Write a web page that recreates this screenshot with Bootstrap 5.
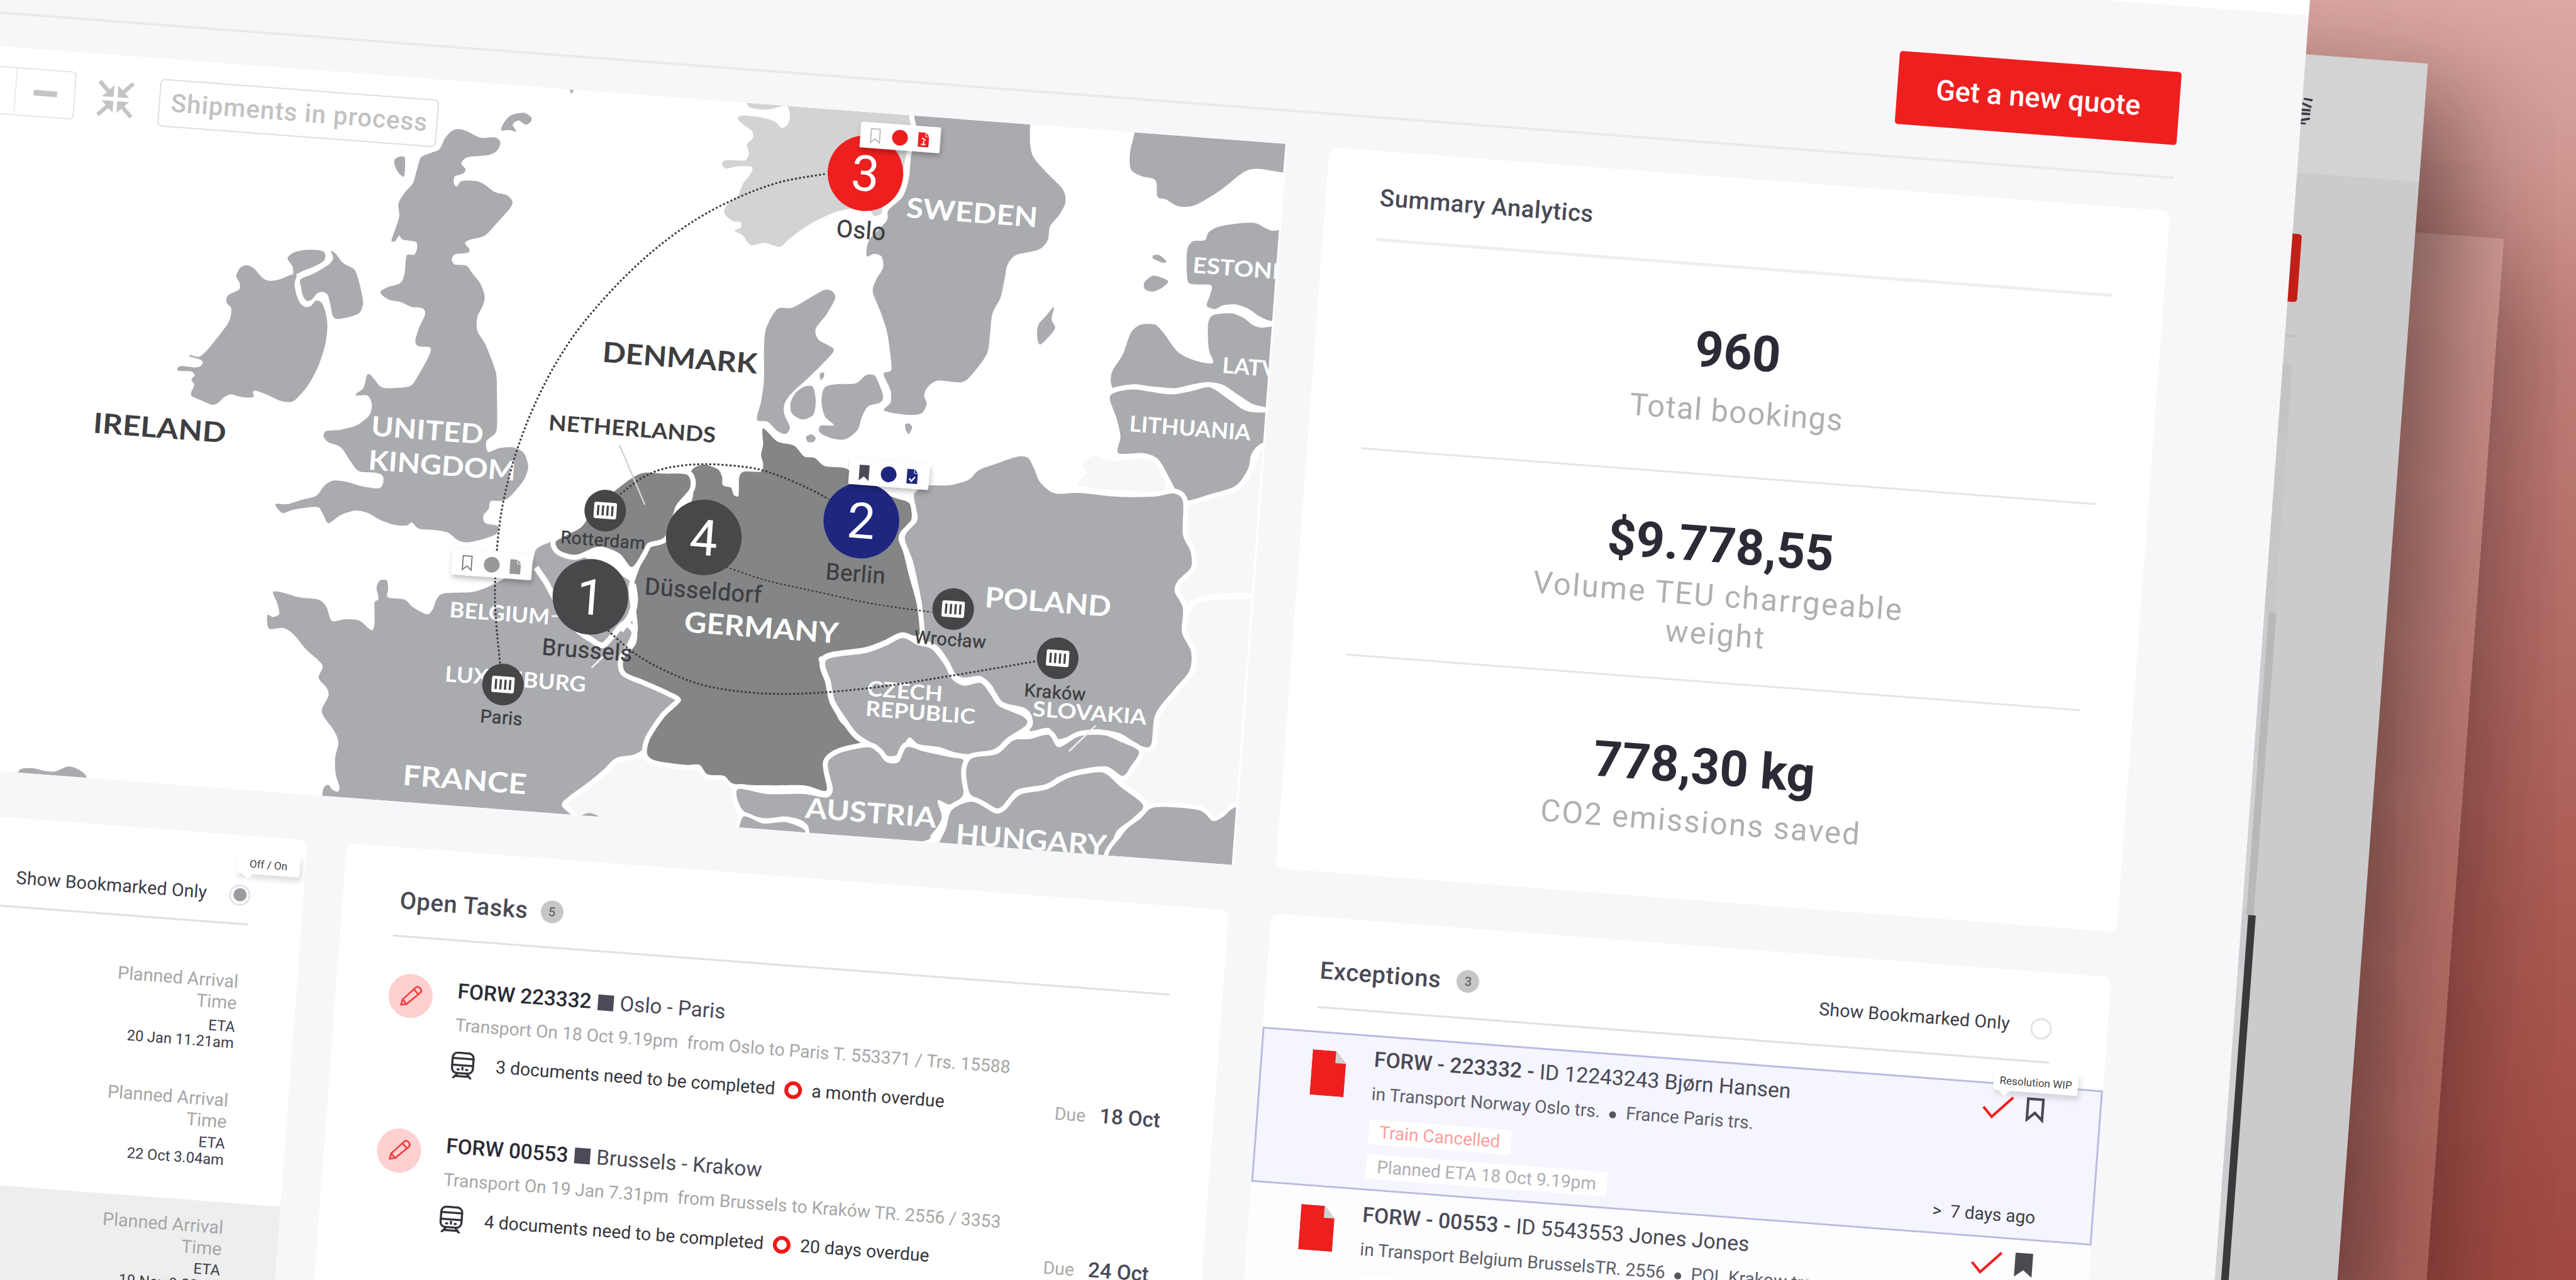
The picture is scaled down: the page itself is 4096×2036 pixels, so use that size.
<!DOCTYPE html>
<html lang="en">
<head>
<meta charset="utf-8">
<title>Shipment dashboard</title>
<meta name="viewport" content="width=device-width, initial-scale=1">
<link href="https://cdn.jsdelivr.net/npm/bootstrap@5.3.0/dist/css/bootstrap.min.css" rel="stylesheet">
<style>
  html, body { height: 100%; margin: 0; overflow: hidden; }
  body { font-family: Roboto, "Liberation Sans", sans-serif; color: #4a4a56; font-size: 28px; line-height: 40px;
    background: linear-gradient(183deg, #dca8a3 0%, #cf9690 12%, #c4827b 24%, #b8706a 42%, #aa5a52 65%, #a04a43 88%, #9e4841 100%); }
  .stage { position: relative; width: 4096px; height: 2036px; overflow: hidden; }
  .tilt { position: absolute; left: 0; top: 0; width: 4096px; height: 2036px; transform-origin: 0 0; transform: matrix(1, .0760, -.0743, 1, 0, 3); }
  .win { position: absolute; }
  .win-glass { left: 2600px; top: 74px; width: 1387px; height: 2400px; background: rgba(255,235,232,.16); box-shadow: 30px 50px 170px rgba(40,20,20,.38); }
  .win-back { left: 2400px; top: -194px; width: 1446px; height: 2600px; background: #cbcbcd; box-shadow: 40px 55px 170px rgba(40,24,22,.62); }
  .win-back .bar-top { height: 188px; background: #d3d3d3; }
  .win-main { left: -40px; top: -420px; width: 3692px; height: 2700px; background: #f7f7f9; }
  .bar-white { height: 164px; background: #fff; }
  .page-head { height: 275px; margin-right: 194px; padding-top: 105px; border-bottom: 4px solid #eaeaeb; }
  .btn-quote { width: 448px; height: 116px; border-radius: 5px; background: #ee1f1f; color: #fff; font-size: 45px; font-weight: 500; line-height: 116px; padding: 0; border: 0; }
  .row-one { margin-top: 51px; gap: 67px; height: 1147px; }
  .row-two { margin-top: 72px; height: 1100px; }
  .panel { background: #fff; border-radius: 12px; position: relative; }
  .map-panel { width: 2092px; border-radius: 0; overflow: hidden; }
  .sum-panel { width: 1337px; padding: 0 83px 0 86px; }
  .p-title { font-size: 38px; font-weight: 500; color: #4a4a56; letter-spacing: .6px; }
  .sum-head { height: 143px; padding-top: 10px; border-bottom: 5px solid #efefef; }
  .stat { height: 331px; border-bottom: 3px solid #e5e5e5; padding-top: 87px; }
  .stat-two { height: 328px; padding-top: 64px; padding-right: 9px; }
  .stat-three { border-bottom: 0; padding-top: 88px; padding-right: 9px; }
  .num { font-size: 79px; line-height: 90px; font-weight: 700; color: #2b2b36; }
  .cap { font-size: 49px; line-height: 61px; letter-spacing: 1.3px; color: #b0b0b3; max-width: 660px; margin: 20px auto 0; padding-left: 10px; }
  .stat-two .cap { margin-top: 5px; letter-spacing: 2.4px; padding-left: 4px; } .stat-three .cap { margin-top: 13px; letter-spacing: 2.1px; padding-left: 2px; }

  .map-tools { position: absolute; left: 0; top: 31px; }
  .zoom-box { width: 170px; height: 77px; border: 2px solid #e3e3e3; border-left: 0; border-radius: 0 7px 7px 0; background: #fff; }
  .zoom-box .cell { width: 94px; border-left: 2px solid #ebebeb; }
  .minus-sign { width: 37px; height: 9px; background: #c4c4c4; }
  .ship-filter { width: 443px; height: 76px; border: 2px solid #dfdfdf; border-radius: 7px; color: #c2c2c2; font-size: 40px; letter-spacing: 1.1px; background: #fff; font-weight: 500; margin-left: 40px; padding-left: 4px; }

  .card-a { width: 625px; } .card-b { width: 1403px; margin-left: 62px; padding: 0 84px 0 84px; } .card-c { width: 1336px; margin-left: 67px; }
  .head-line { height: 142px; padding-top: 28px; border-bottom: 3px solid #e0e0e0; }
  .cnt { width: 36px; height: 36px; border-radius: 50%; background: #c6c6c6; font-size: 20px; font-weight: 500; color: #666; margin-left: 20px; }
  .show-only { font-size: 28.5px; color: #3c3c47; letter-spacing: .15px; }
  .radio-dot { width: 34px; height: 34px; border-radius: 50%; border: 3px solid #e4e4e4; background: #fff; }
  .radio-dot i { width: 21px; height: 21px; border-radius: 50%; background: #9c9ca0; }
  .tip { position: absolute; background: #fff; color: #444; font-size: 17px; box-shadow: 3px 7px 9px rgba(0,0,0,.13); border-radius: 4px; white-space: nowrap; }
  .tip::after { content: ""; position: absolute; left: 9px; bottom: -9px; border: 9px solid transparent; border-top-color: #fff; border-bottom: 0; }

  .arr { text-align: right; height: 189px; }
  .arr .gr { color: #a6a6a6; line-height: 34px; font-size: 28.6px; padding-left: 200px; }
  .arr .eta { font-size: 23.6px; line-height: 26px; color: #3c3c47; margin-top: 8px; }

  .task { height: 245.5px; gap: 39px; }
  .pen { width: 70px; height: 70px; border-radius: 50%; background: #ffd0d0; }
  .t-title { font-size: 33.2px; line-height: 44px; white-space: nowrap; }
  .t-title b { font-weight: 500; color: #2c2c36; }
  .sq { width: 25px; height: 25px; background: #4a4a58; margin: 0 10px; }
  .t-sub { color: #a6a6a6; font-size: 28.15px; line-height: 40px; margin-top: 12px; white-space: pre; }
  .t-docs { height: 44px; margin-top: 20px; color: #36363c; white-space: nowrap; font-size: 28.3px; }
  .ring { width: 28px; height: 28px; border-radius: 50%; border: 6px solid #f01818; }

  .exc { height: 247px; border: 3px solid transparent; padding: 14px 0 0 79px; position: relative; background: #fdfdff; }
  .exc-on { border-color: #b9bbe0; background: #f5f5fe; }
  .exc-main { margin-left: 44px; }
  .e-title { font-size: 33.6px; line-height: 44px; white-space: nowrap; }
  .e-title b { font-weight: 500; }
  .e-sub { margin-top: 13px; line-height: 40px; font-size: 28.1px; color: #5e5e69; white-space: nowrap; }
  .e-sub i { width: 11px; height: 11px; border-radius: 50%; background: #55555f; margin: 6px 15px 0 15px; }
  .tagx { display: table; background: #fff; line-height: 39px; padding: 0 17px; color: #aeaeb3; border-radius: 3px; margin-bottom: 16px; }
  .tagx.red { color: #ff9d9d; margin-top: 20px; }
  .e-icons { position: absolute; right: 87px; top: 16px; }
  .e-age { position: absolute; right: 89px; bottom: 14px; color: #3c3c47; }

  .strip { position: absolute; }
  text { font-family: Roboto, "Liberation Sans", sans-serif; }
  text.ctry { font-family: Lato, "Liberation Sans", sans-serif; font-weight: 700; }
</style>
<script src="https://cdn.jsdelivr.net/npm/bootstrap@5.3.0/dist/js/bootstrap.bundle.min.js"></script>
</head>
<body>
<svg width="0" height="0" class="position-absolute">
  <defs>
    <symbol id="i-pen" viewBox="0 0 40 40"><g fill="none" stroke="#f2383c" stroke-width="2.600" stroke-linejoin="round" stroke-linecap="round"><path d="M5 35 L7 26 L27 5 Q30 2.500 33 5 L35 7 Q37.500 10 35 13 L14 33 Z"/><path d="M24 8 L32 16 M7 26 L14 33"/></g></symbol>
    <symbol id="i-train" viewBox="0 0 40 44"><g fill="none" stroke="#33333a" stroke-width="3.400" stroke-linejoin="round" stroke-linecap="round"><rect x="3" y="2" width="34" height="33" rx="8"/><path d="M3 11 H37 M3 22 H37 M20 22 V29 M12 29 H14 M26 29 H28 M12 36 L6 43 M28 36 L34 43 M10 40 H30"/></g></symbol>
    <symbol id="i-file" viewBox="0 0 54 72"><path d="M0 0 H37 L54 19 V72 H0 Z" fill="#ee1f1f"/><path d="M37 0 L54 19 H37 Z" fill="#d0d0d2"/></symbol>
    <symbol id="i-check" viewBox="0 0 50 40"><path d="M2 21 L16 36 L48 3" fill="none" stroke="#f02020" stroke-width="4.200"/></symbol>
    <symbol id="i-mark" viewBox="0 0 30 40"><path d="M3 3 H27 V36 L15 25 L3 36 Z" fill="none" stroke="#4a4a56" stroke-width="4.200"/></symbol>
    <symbol id="i-mark-on" viewBox="0 0 30 40"><path d="M1 1 H29 V39 L15 28 L1 39 Z" fill="#4a4a50"/></symbol>
  </defs>
</svg>

<div class="stage">
 <div class="tilt">
  <div class="win win-glass"></div>

  <div class="win win-back">
    <div class="bar-top"></div>
    <div class="strip" style="left:1200px;top:285px;width:67px;height:108px;background:#c02018;border-radius:5px"></div>
    <div class="strip" style="left:1200px;top:446px;width:67px;height:3px;background:#bdbdbf"></div>
    <div class="strip" style="left:1200px;top:492px;width:67px;height:110px;background:#c3c3c3;border-radius:0 8px 0 0"></div>
    <div class="strip" style="left:1200px;top:602px;width:68px;height:285px;background:#c7c7c7"></div>
    <div class="strip" style="left:1200px;top:887px;width:72px;height:1500px;background:linear-gradient(#cbcbd0 0 226px,#d1d1d1 226px 471px,#cbcbd0 471px 569px,#d1d1d1 569px 811px,#cbcbd0 811px 919px,#d1d1d1 919px)"></div>
    <div class="strip" style="left:1259px;top:887px;width:12px;height:481px;background:#b8b8b8"></div>
    <div class="strip" style="left:1262px;top:1368px;width:12px;height:1100px;background:#3a3a3c"></div>
    <svg class="strip" style="left:1246px;top:69px" width="24" height="42" viewBox="0 0 24 42"><path d="M4 8 L21 14 M8 1 L22 3 M0 19 H20 M0 25 H20 M4 36 L20 32 M2 40 L14 41" stroke="#3c3c46" stroke-width="3.600" fill="none"/></svg>
  </div>

  <div class="win win-main d-flex flex-column">
    <div class="bar-white flex-shrink-0"></div>
    <header class="page-head d-flex justify-content-end flex-shrink-0">
      <button class="btn btn-quote">Get a new quote</button>
    </header>

    <div class="row-one d-flex flex-shrink-0">
      <section class="panel map-panel">
        <svg id="map" class="d-block" width="2089" height="1147" viewBox="-40 74 2089 1147"></svg>
        <div class="map-tools d-flex align-items-center">
          <div class="zoom-box d-flex justify-content-end align-items-stretch">
            <div class="cell d-flex align-items-center justify-content-center"><div class="minus-sign"></div></div>
          </div>
          <svg width="58" height="58" viewBox="0 0 24 24" style="margin-left:35px"><g fill="#c4c4c4" stroke="#c4c4c4" stroke-width="2.600"><path d="M1 1 L8 8 M23 1 L16 8 M1 23 L8 16 M23 23 L16 16"/><path stroke="none" d="M10.700 3 V10.700 H3 Z M13.300 3 V10.700 H21 Z M10.700 21 V13.300 H3 Z M13.300 21 V13.300 H21 Z"/></g></svg>
          <div class="ship-filter d-flex align-items-center justify-content-center">Shipments in process</div>
        </div>
      </section>

      <section class="panel sum-panel">
        <div class="sum-head d-flex align-items-center"><span class="p-title">Summary Analytics</span></div>
        <div class="stat text-center"><div class="num">960</div><div class="cap">Total bookings</div></div>
        <div class="stat stat-two text-center"><div class="num">$9.778,55</div><div class="cap">Volume TEU charrgeable weight</div></div>
        <div class="stat stat-three text-center"><div class="num">778,30 kg</div><div class="cap">CO2 emissions saved</div></div>
      </section>
    </div>

    <div class="row-two d-flex flex-shrink-0">
      <section class="panel card-a">
        <div class="head-line d-flex align-items-center justify-content-end" style="margin-right:85px;padding-top:50px">
          <span class="show-only">Show Bookmarked Only</span>
          <span class="radio-dot d-flex align-items-center justify-content-center" style="margin:0 -1px 0 35px"><i></i></span>
        </div>
        <div class="tip" style="left:516px;top:26px;width:100px;height:34px;line-height:36px;text-align:center">Off / On</div>
        <div class="arr" style="padding:73px 93px 0 0;height:252px">
          <div class="gr">Planned Arrival<br>Time</div>
          <div class="eta">ETA<br>20 Jan 11.21am</div>
        </div>
        <div class="arr" style="padding:10px 95px 0 0">
          <div class="gr">Planned Arrival<br>Time</div>
          <div class="eta" style="margin-top:5px">ETA<br>22 Oct 3.04am</div>
        </div>
        <div class="arr" style="background:#eee;padding:23px 88px 0 0;height:400px">
          <div class="gr">Planned Arrival<br>Time</div>
          <div class="eta" style="margin-top:4px">ETA<br>19 Nov 9.22am</div>
        </div>
      </section>

      <section class="panel card-b">
        <div class="head-line d-flex align-items-center"><span class="p-title" style="padding-left:7px">Open Tasks</span><span class="cnt d-flex align-items-center justify-content-center">5</span></div>
        <div style="height:57px"></div>
        <div class="task d-flex">
          <div class="pen flex-shrink-0 d-flex align-items-center justify-content-center"><svg width="39" height="39"><use href="#i-pen"/></svg></div>
          <div class="flex-grow-1">
            <div class="t-title d-flex align-items-center"><b>FORW 223332</b><span class="sq"></span>Oslo - Paris</div>
            <div class="t-sub">Transport On 18 Oct 9.19pm  from Oslo to Paris T. 553371 / Trs. 15588</div>
            <div class="t-docs d-flex align-items-center">
              <svg width="39" height="43" style="margin:0 33px 0 -3px"><use href="#i-train"/></svg>3 documents need to be completed
              <span class="ring" style="margin:0 15px"></span>a month overdue
              <span class="ms-auto d-flex align-items-baseline" style="padding-top:9px"><span style="color:#aaa;margin-right:22px">Due</span><span style="font-size:33px;font-weight:500;color:#4a4a58">18 Oct</span></span>
            </div>
          </div>
        </div>
        <div class="task d-flex">
          <div class="pen flex-shrink-0 d-flex align-items-center justify-content-center"><svg width="39" height="39"><use href="#i-pen"/></svg></div>
          <div class="flex-grow-1">
            <div class="t-title d-flex align-items-center"><b>FORW 00553</b><span class="sq"></span>Brussels - Krakow</div>
            <div class="t-sub">Transport On 19 Jan 7.31pm  from Brussels to Kraków TR. 2556 / 3353</div>
            <div class="t-docs d-flex align-items-center">
              <svg width="39" height="43" style="margin:0 33px 0 -3px"><use href="#i-train"/></svg>4 documents need to be completed
              <span class="ring" style="margin:0 15px"></span>20 days overdue
              <span class="ms-auto d-flex align-items-baseline" style="padding-top:9px"><span style="color:#aaa;margin-right:22px">Due</span><span style="font-size:33px;font-weight:500;color:#4a4a58">24 Oct</span></span>
            </div>
          </div>
        </div>
      </section>

      <section class="panel card-c">
        <div class="head-line d-flex align-items-center" style="margin:0 88px 0 84px;height:144px;padding-top:26px">
          <span class="p-title">Exceptions</span><span class="cnt d-flex align-items-center justify-content-center" style="margin-left:25px">3</span>
          <span class="show-only ms-auto" style="padding-top:4px">Show Bookmarked Only</span><span class="radio-dot" style="margin:12px 0 0 33px"></span>
        </div>
        <div class="exc exc-on d-flex align-items-start" style="margin-top:36px">
          <svg class="flex-shrink-0" width="54" height="72" style="margin-top:13px"><use href="#i-file"/></svg>
          <div class="exc-main">
            <div class="e-title"><b>FORW - 223332 -</b> ID 12243243 Bjørn Hansen</div>
            <div class="e-sub d-flex align-items-center">in Transport Norway Oslo trs.<i></i>France Paris trs.</div>
            <div class="tagx red">Train Cancelled</div>
            <div class="tagx">Planned ETA 18 Oct 9.19pm</div>
          </div>
          <div class="tip" style="right:37px;top:-27px;width:134px;height:36px;line-height:40px;text-align:center">Resolution WIP</div>
          <div class="e-icons d-flex align-items-start"><svg width="50" height="40"><use href="#i-check"/></svg><svg width="30" height="40" style="margin-left:19px"><use href="#i-mark"/></svg></div>
          <div class="e-age">&gt;&nbsp; 7 days ago</div>
        </div>
        <div class="exc d-flex align-items-start">
          <svg class="flex-shrink-0" width="54" height="72" style="margin-top:12px"><use href="#i-file"/></svg>
          <div class="exc-main">
            <div class="e-title"><b>FORW - 00553 -</b> ID 5543553 Jones Jones</div>
            <div class="e-sub d-flex align-items-center">in Transport Belgium BrusselsTR. 2556<i></i>POL Krakow trs.</div>
            <div class="tagx red">Train Cancelled</div>
          </div>
          <div class="e-icons d-flex align-items-start"><svg width="50" height="40"><use href="#i-check"/></svg><svg width="30" height="40" style="margin-left:19px"><use href="#i-mark-on"/></svg></div>
        </div>
      </section>
    </div>
  </div>
 </div>
</div>

<script>
// Survey sheets: each outline is traced on one of four sheets, [x offset, y offset].
const SHEET = { a: [0, 0], b: [1568, 288], c: [0, 1438], d: [1568, 1726] };
const K = 2.5978;
const geo = (X, Y) => [(X + .0740 * Y) * K, (Y - .0757 * X) * K + 1.5];
const pt = (s, x, y) => geo((x + SHEET[s][0]) * .25, (y + SHEET[s][1]) * .16614);
const parse = str => str.trim().split(/\s+/).map(p => p.split(',').map(Number));
function smooth(p, closed, t = 7) {
  const n = p.length, at = i => closed ? p[(i + n) % n] : p[Math.max(0, Math.min(n - 1, i))];
  const f = v => v.toFixed(1);
  let d = `M${f(p[0][0])} ${f(p[0][1])}`;
  for (let i = 0; i < (closed ? n : n - 1); i++) {
    const a = at(i - 1), b = at(i), c = at(i + 1), e = at(i + 2);
    d += `C${f(b[0] + (c[0] - a[0]) / t)} ${f(b[1] + (c[1] - a[1]) / t)} ${f(c[0] - (e[0] - b[0]) / t)} ${f(c[1] - (e[1] - b[1]) / t)} ${f(c[0])} ${f(c[1])}`;
  }
  return d + (closed ? 'Z' : '');
}
const G = '#a9abaf', D = '#848587', N = '#d2d3d5', L = '#f7f7f8';
const lands = [
 ['d', L, 0, '1310,110 1460,50 1515,-100 1620,-120 1620,1250 1440,1240 1385,1290 1350,1245 1220,1230 1140,1125 1200,1010 1230,880'],
 ['d', L, 0, '-210,1290 -190,1200 -110,1110 -60,1062 0,1055 240,1150 250,1400 -210,1400'],
 ['b', L, 0, '1095,1380 1140,1400 1210,1390 1250,1410 1270,1480 1265,1510 1200,1510 1060,1490 1080,1440 1065,1415'],
 ['a', G, 0, '575,1010 585,980 600,970 618,982 640,1018 658,1028 685,1020 716,1002 722,1010 717,1040 722,1080 732,1112 745,1124 758,1118 770,1100 783,1108 792,1140 797,1190 792,1260 775,1340 750,1410 720,1462 705,1472 680,1466 650,1445 622,1430 616,1436 616,1454 590,1454 562,1444 545,1455 530,1476 515,1482 490,1466 465,1446 473,1410 466,1390 474,1375 466,1360 436,1358 432,1348 442,1340 478,1345 492,1335 490,1318 462,1305 464,1300 485,1306 505,1280 535,1225 558,1175 563,1130 551,1105 556,1080 582,1060 583,1035'],
 ['a', G, 0, '700,945 715,924 745,914 780,916 792,930 788,955 765,975 740,990 716,1004 712,975'],
 ['a', G, 0, '732,1022 765,1000 800,968 811,945 806,918 818,930 835,962 862,985 872,1020 880,1070 884,1110 875,1145 850,1160 820,1167 810,1155 805,1120 798,1080 785,1068 772,1074 760,1095 748,1102 738,1085 733,1050'],
 ['a', G, 0, '1100,478 1115,471 1135,478 1170,503 1205,502 1218,520 1210,550 1190,566 1140,574 1125,590 1124,602 1133,618 1128,634 1107,645 1105,670 1112,682 1124,662 1160,662 1180,675 1205,702 1232,712 1247,735 1242,760 1210,815 1180,862 1142,878 1132,890 1143,912 1138,925 1108,930 1100,950 1108,968 1135,972 1150,1000 1170,1040 1180,1085 1175,1120 1162,1160 1162,1210 1180,1255 1195,1310 1208,1370 1210,1450 1210,1560 1205,1588 1185,1613 1184,1638 1190,1655 1215,1641 1250,1638 1275,1658 1286,1708 1275,1758 1245,1813 1225,1833 1195,1835 1190,1863 1177,1888 1182,1916 1212,1926 1210,1953 1185,1970 1140,1986 1115,1978 1090,1950 1060,1941 1020,1936 1003,1913 990,1924 960,1922 925,1903 895,1878 865,1870 830,1886 800,1916 788,1888 775,1858 740,1860 710,1868 690,1879 680,1870 671,1846 700,1846 735,1830 770,1816 790,1778 810,1760 840,1763 880,1780 920,1788 932,1773 932,1743 915,1731 875,1726 855,1693 830,1638 800,1620 788,1598 795,1578 830,1573 870,1556 900,1518 905,1478 895,1448 868,1448 868,1440 885,1420 893,1375 900,1370 912,1390 930,1418 965,1420 1000,1412 1020,1370 1045,1300 1047,1272 1020,1268 1011,1250 1020,1200 1035,1150 1028,1128 1000,1122 975,1105 950,1098 930,1080 927,1065 945,1050 975,1035 985,1000 990,935 1008,932 1015,910 1012,885 980,876 972,862 962,882 953,880 962,840 972,790 970,745 985,705 1005,670 1015,620 1025,575 1050,558 1070,545 1083,505'],
 ['a', G, 0, '972,573 985,575 986,610 983,645 972,635 962,610 960,585'],
 ['a', G, 0, '1220,475 1228,445 1245,420 1275,412 1293,428 1292,445 1280,455 1262,440 1248,455 1257,480 1240,475'],
 ['a', G, 0, '1386,324 1395,320 1396,330 1390,342 1388,330'],
 ['c', G, 0, '45,1390 75,1376 110,1386 135,1388 165,1370 190,1380 212,1412 212,1500 45,1500'],
 ['c', G, 0, '1415,1550 1435,1540 1455,1550 1455,1570 1415,1570'],
 ['c', G, 16, '665,730 690,733 730,750 775,758 795,785 808,836 840,830 875,835 905,870 912,840 912,770 922,755 917,715 925,688 942,688 945,720 945,750 985,758 1005,785 1040,812 1055,790 1062,760 1080,735 1150,730 1190,710 1230,680 1290,640 1305,575 1335,550 1355,546 1420,600 1540,700 1550,850 1530,950 1530,1010 1560,1055 1640,1100 1650,1125 1620,1185 1585,1260 1572,1298 1545,1325 1500,1338 1470,1380 1430,1430 1385,1480 1368,1510 1366,1600 785,1600 785,1475 790,1445 800,1437 810,1455 822,1462 827,1445 818,1400 816,1340 824,1280 812,1235 790,1190 784,1160 800,1110 795,1080 776,1045 786,1005 775,980 745,940 715,885 690,862 655,864 651,815 665,822 680,810 675,770'],
 ['b', N, 16, '250,88 260,105 300,112 345,98 355,130 350,165 335,178 318,155 290,142 240,133 228,145 240,165 262,190 265,215 250,240 255,270 245,298 200,297 190,312 200,328 225,320 262,322 258,350 240,385 228,430 205,455 195,490 215,520 235,525 235,545 220,555 240,572 260,608 295,600 330,615 350,590 400,535 470,485 540,470 560,500 578,490 585,430 620,400 635,300 652,180 660,90 650,40 250,40'],
 ['b', G, 16, '678,90 945,90 940,160 940,240 950,290 985,350 1020,405 1026,450 1012,495 988,540 983,590 960,625 905,645 885,680 878,730 868,800 848,860 842,940 835,1005 805,1070 775,1110 715,1105 690,1130 682,1160 688,1190 675,1225 640,1230 585,1215 600,1185 600,1140 583,1080 600,1070 602,1040 592,930 575,850 557,780 565,735 582,690 578,650 560,640 542,648 548,590 590,520 595,480 630,430 645,360 650,280 665,200'],
 ['b', G, 0, '325,842 360,838 400,805 440,772 460,780 465,805 445,860 418,915 425,955 462,990 440,1035 400,1095 360,1150 342,1190 342,1230 355,1275 345,1300 325,1290 300,1255 275,1248 285,1180 292,1100 292,980 298,910'],
 ['b', G, 0, '395,1125 412,1130 418,1180 412,1230 385,1247 360,1225 357,1185 372,1145'],
 ['b', G, 0, '440,1130 470,1118 515,1115 540,1085 560,1085 570,1110 582,1160 575,1185 545,1200 530,1240 520,1285 490,1320 455,1315 428,1295 430,1270 462,1268 440,1235 432,1180'],
 ['b', G, 0, '395,1310 408,1302 418,1315 412,1330 398,1328'],
 ['b', G, 0, '428,1080 437,1075 438,1090 430,1102'],
 ['b', G, 0, '636,1265 645,1262 653,1275 645,1300 637,1285'],
 ['b', G, 0, '1195,190 1183,270 1185,330 1210,355 1245,370 1250,430 1270,440 1300,465 1340,462 1400,410 1460,340 1495,328 1560,342 1620,340 1620,150 1195,150'],
 ['b', G, 0, '1365,590 1375,560 1400,540 1450,528 1490,528 1530,555 1620,560 1620,890 1535,888 1500,870 1470,840 1440,825 1410,828 1390,842 1370,830 1378,790 1380,755 1330,750 1322,720 1322,630 1335,595'],
 ['b', G, 0, '1225,897 1245,900 1265,930 1300,1000 1340,1030 1385,1040 1375,990 1373,900 1385,865 1430,858 1460,875 1500,910 1620,912 1620,1200 1500,1198 1450,1160 1410,1120 1370,1110 1330,1120 1290,1132 1230,1125 1190,1118 1150,1140 1137,1115 1140,1070 1165,1010 1185,930 1205,902'],
 ['b', G, 16, '1135,1160 1190,1137 1280,1155 1340,1140 1380,1130 1430,1180 1480,1220 1620,1222 1600,1300 1510,1330 1480,1370 1470,1430 1440,1490 1380,1520 1320,1545 1300,1520 1275,1450 1250,1390 1215,1370 1155,1370 1160,1310 1150,1240'],
 ['b', G, 0, '998,835 992,880 1000,915 965,972 957,940 960,900 980,865'],
 ['b', G, 0, '1240,720 1275,738 1265,760 1240,778 1220,770 1218,745'],
 ['b', G, 0, '1240,645 1255,645 1272,668 1262,672 1240,658'],
 ['d', D, 16, '290,-158 325,-110 365,-95 390,-55 415,-50 440,-20 490,-12 520,20 600,90 640,110 650,130 650,180 625,220 620,250 632,300 645,380 660,460 675,560 672,600 628,598 590,620 540,648 450,672 425,685 440,740 450,820 475,910 500,945 540,985 470,1025 445,1060 440,1110 443,1170 390,1150 300,1150 220,1145 195,1115 155,1110 135,1075 100,1075 30,1060 8,1035 15,980 50,900 90,838 60,805 0,765 -45,735 -50,690 -30,640 -15,580 -20,500 -25,420 -5,330 10,270 50,245 75,160 115,110 120,50 115,0 130,-20 150,-25 180,-8 190,20 192,50 212,60 218,85 230,88 232,20 245,0 285,0 290,-30 285,-60 290,-100'],
 ['d', D, 16, '105,12 112,60 80,120 70,160 50,240 10,262 -5,300 -30,350 -60,300 -110,275 -165,305 -205,290 -215,258 -190,235 -150,200 -120,130 -70,70 -30,25 0,5 50,8'],
 ['d', G, 16, '690,52 745,50 790,30 815,-5 860,-30 910,-55 935,-50 950,-10 965,40 1000,80 1060,78 1150,92 1240,92 1290,80 1312,110 1312,230 1330,290 1332,350 1300,400 1292,440 1312,500 1310,590 1332,660 1328,730 1290,800 1245,890 1235,1000 1210,1005 1160,960 1110,945 1070,950 1010,980 985,940 940,950 945,900 925,865 860,840 850,790 820,750 780,755 755,740 740,690 715,640 680,615 684,590 675,470 655,330 635,240 665,180 662,130 658,80'],
 ['d', G, 18, '445,690 540,665 590,638 630,610 665,635 700,650 730,705 750,760 780,785 820,775 845,820 865,860 925,900 930,930 885,975 855,1015 800,1035 760,1030 720,1010 670,1000 645,975 620,1035 590,1040 560,1000 520,960 490,900 465,840 455,770'],
 ['d', G, 16, '545,1010 570,1030 590,1065 620,1065 640,1010 680,1025 740,1045 780,1060 780,1130 775,1190 745,1220 715,1205 725,1270 700,1330 670,1360 420,1450 400,1300 350,1265 290,1270 240,1240 228,1165 300,1182 390,1182 445,1195 460,1165 450,1100 450,1060 480,1030'],
 ['d', G, 12, '240,1268 290,1290 345,1285 388,1310 395,1340 395,1400 240,1400'],
 ['d', G, 16, '800,1050 860,1035 900,985 940,980 985,965 1010,1010 1060,970 1120,966 1160,990 1205,1025 1185,1080 1165,1115 1125,1080 1060,1092 1010,1118 980,1145 910,1165 880,1215 860,1238 800,1190 788,1150 785,1090'],
 ['d', G, 16, '750,1240 800,1210 855,1252 880,1240 915,1185 980,1165 1030,1125 1075,1108 1120,1104 1160,1155 1215,1222 1190,1270 1150,1320 1135,1400 1130,1440 690,1440 715,1370 735,1310'],
 ['d', G, 14, '1150,1440 1165,1330 1210,1270 1245,1230 1350,1240 1385,1280 1410,1265 1440,1230 1500,1225 1500,1500'],
];
const whites = [
 ['c', 9, '1305,640 1330,695 1350,750 1400,860 1440,905 1468,925 1495,885 1520,845 1543,870 1542,915 1520,955'],
 ['c', 11, '1540,700 1545,760 1535,820 1510,870'],
 ['d', 9, '1320,520 1335,485 1360,465 1400,458 1490,456'],
];
const routes = [
 ['502,105.600 475,110.500 449.500,119.800 424.500,132.800 401,149.500 380,168.500 362,188 347.500,206.500 333,230.500 320,259 310,289.500 303.700,322 301.300,363.600 304.500,405', 3],
 ['377.500,300.500 392,290 407,284.400 429.500,282.300 457,284.500 474.500,289.500 492,297 504.500,303.600', 3],
 ['442,344.900 467,353.200 497,359.900 532,367.400 567,372.300', 2.2],
 ['370,383.500 387,398 407,409 429.500,417.200 459,421.500 492,421.800 534,418 579.500,411 632,402', 3],
];
let out = '';
for (const [s, fill, w, str] of lands)
  out += `<path d="${smooth(parse(str).map(p => pt(s, ...p)), true)}" fill="${fill}"${w ? ` stroke="#fff" stroke-width="${w}" stroke-linejoin="round" paint-order="stroke"` : ''}/>`;
for (const [s, w, str] of whites)
  out += `<path d="${smooth(parse(str).map(p => pt(s, ...p)), false)}" fill="none" stroke="#fff" stroke-width="${w}"/>`;
const seg = (s, a, b, col) => { const p = pt(s, ...a), q = pt(s, ...b); out += `<line x1="${p[0]}" y1="${p[1]}" x2="${q[0]}" y2="${q[1]}" stroke="${col}" stroke-width="2.500"/>`; };
seg('c', [1508, 190], [1570, 410], '#d4d4d6'); seg('c', [1440, 1008], [1470, 965], '#f4f4f5'); seg('d', [1100, 930], [1035, 1025], '#f0f0f1'); seg('c', [1343, 818], [1360, 818], '#fff');

// Country names: text, x, y, width, size, colour, anchor
const W = '#fff', B = '#3f3f41';
const names = [
 ['SWEDEN', 591.2, 135, 80, 16.8, W], ['DENMARK', 413.4, 223.6, 94.5, 17, B], ['NETHERLANDS', 384.5, 265.4, 102, 13, B],
 ['IRELAND', 96.8, 266.3, 81, 17, B], ['UNITED', 259.7, 267.5, 68.5, 16.5, W], ['KINGDOM', 268.7, 289, 90, 16.5, W],
 ['BELGIUM', 303.8, 377.7, 61, 13, W], ['LUXEMBURG', 313.5, 417.8, 86, 13, W], ['FRANCE', 282.5, 480.5, 75.5, 17, W],
 ['GERMANY', 463, 387.9, 94, 17.3, W], ['POLAND', 637.5, 372.2, 77, 17.3, W], ['CZECH', 550.6, 425, 46, 12.8, W],
 ['REPUBLIC', 560, 438, 67, 12.8, W], ['SLOVAKIA', 663, 438.2, 69.5, 12.8, W], ['AUSTRIA', 529.7, 500.6, 80, 17, W],
 ['HUNGARY', 627.3, 517, 92, 17, W], ['LITHUANIA', 724, 265, 74, 13.3, W],
 ['ESTONIA', 725.7, 165.6, 63, 13.3, W, 'start'], ['LATVIA', 743.7, 226.6, 47, 13.3, W, 'start'],
];
for (const [t, X, Y, w, s, c, a] of names) {
  const p = geo(X, Y);
  out += `<text class="ctry" x="${p[0]}" y="${p[1]}" font-size="${s * 2.605}" fill="${c}" text-anchor="${a || 'middle'}" textLength="${w * 2.605}" lengthAdjust="spacingAndGlyphs">${t}</text>`;
}
for (const [str, w] of routes)
  out += `<path d="${smooth(parse(str).map(p => geo(...p)), false, 6)}" fill="none" stroke="#3c3c3e" stroke-width="${w}" stroke-dasharray="3.200 3.200"/>`;

const label = (t, X, Y, s, c = '#3e3e40') => { const p = geo(X, Y); out += `<text x="${p[0]}" y="${p[1]}" font-size="${s * 2.605}" fill="${c}" stroke="${c}" stroke-width=".5" letter-spacing=".5" text-anchor="middle">${t}</text>`; };
const hub = (n, X, Y, c) => { const p = geo(X, Y); out += `<circle cx="${p[0]}" cy="${p[1]}" r="60" fill="${c}"/><text x="${p[0]}" y="${p[1] + 28}" font-size="79" fill="#fff" text-anchor="middle">${n}</text>`; };
const depot = (X, Y) => { const [x, y] = geo(X, Y); out += `<circle cx="${x}" cy="${y}" r="33" fill="#464648"/><rect x="${x - 18}" y="${y - 13}" width="36" height="26" rx="3" fill="#fff"/>` + [-11.5, -4, 3.5, 11].map(d => `<rect x="${x + d - 1.5}" y="${y - 8}" width="3.400" height="16" fill="#464648"/>`).join(''); };
const chip = (X, Y, c, mark, full, glyph) => {
  const [x, y] = geo(X, Y);
  out += `<g transform="translate(${x - 2} ${y + 1})"><rect width="127" height="41" rx="2" fill="#fff" filter="url(#drop)"/>
   <path d="M17 10 H31 V32 L24 26 L17 32 Z" fill="${full ? mark : 'none'}" stroke="${mark}" stroke-width="1.800"/>
   <circle cx="63" cy="21" r="12.500" fill="${c}"/>
   <path d="M92 10 H103 L109 17 V33 H92 Z" fill="${c}"/><path d="M103 9 L110 17 H103 Z" fill="#fff"/><path d="M104 10 L109 16 H104 Z" fill="${c}"/>${glyph}</g>`;
};
depot(368.4, 310.6); depot(306.2, 416.5); depot(580.2, 370.5); depot(643.8, 400.4);
hub(3, 526.7, 105.1, '#ee1f1f'); hub(2, 524.3, 316.6, '#1f267f'); hub(4, 428.4, 326.9, '#48484a'); hub(1, 359.4, 363.1, '#48484a');
label('Oslo', 523.8, 144.8, 14.6); label('Berlin', 520.5, 353.7, 14); label('Düsseldorf', 427.8, 364.2, 14.4); label('Brussels', 357.2, 400.4, 14);
label('Rotterdam', 366.8, 332.3, 10.7); label('Paris', 305, 440.4, 11); label('Wrocław', 578.2, 392.8, 11); label('Kraków', 642, 424.9, 11);
chip(525, 73.3, '#ee1f1f', '#b9b9bb', false, '<path d="M98 19 L104 22 M101 23 V29 M97 29 H104" stroke="#fff" stroke-width="2" fill="none"/>');
chip(518.2, 278.3, '#1f267f', '#4a4a58', true, '<path d="M96 25 L99.500 29 L105 22" stroke="#fff" stroke-width="2.400" fill="none"/>');
chip(276.6, 333.4, '#98989b', '#77777b', false, '');
document.getElementById('map').innerHTML = '<defs><filter id="drop" x="-20%" y="-30%" width="140%" height="180%"><feDropShadow dx="2" dy="5" stdDeviation="4" flood-color="#000" flood-opacity=".25"/></filter></defs>' + out;
</script>
</body>
</html>
